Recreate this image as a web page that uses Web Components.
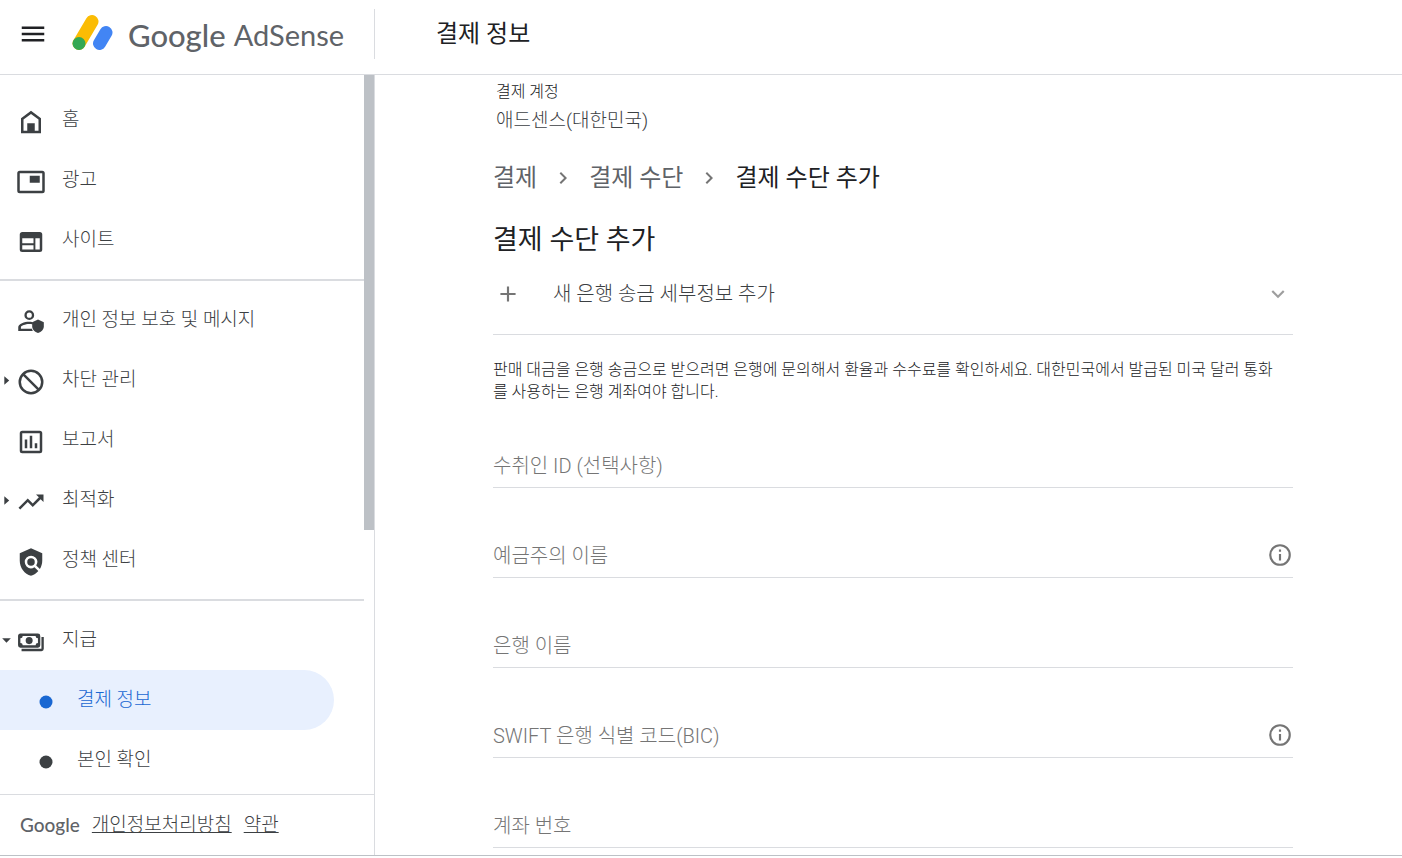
<!DOCTYPE html>
<html lang="ko">
<head>
<meta charset="utf-8">
<meta name="viewport" content="width=device-width, initial-scale=1">
<title>결제 정보 - Google AdSense</title>
<style>
  body {
    margin: 0;
    background: #fff;
    color: #3c4043;
    font-family: Roboto, "Noto Sans CJK KR", sans-serif;
    font-weight: 300;
    font-size: 19px;
  }
</style>
</head>
<body>
<adsense-app></adsense-app>

<script>
const ICONS = {
  home: '<path d="M12 3 4 9v12h16V9zm6 16H6v-9l6-4.5 6 4.5z"/><path d="M9 13h6v7H9z"/>',
  ads: '<path d="M19 7h-8v5.500h8zM21 3H3a2 2 0 0 0-2 2v14a2 2 0 0 0 2 2h18a2 2 0 0 0 2-2V5a2 2 0 0 0-2-2zm0 16H3V5h18z"/>',
  sites: '<path fill-rule="evenodd" d="M5 4h14a2 2 0 0 1 2 2v12a2 2 0 0 1-2 2H5a2 2 0 0 1-2-2V6c0-1.100.9-2 2-2zm0 5v4h9V9zm0 5.500V18h9v-3.500zM15.500 9v9H19V9z"/>',
  privacy: '<g transform="translate(.4 .3) scale(.93)"><path fill-rule="evenodd" d="M11 2.500a4.200 4.200 0 1 1 0 8.400 4.200 4.200 0 0 1 0-8.400zm0 2a2.200 2.200 0 1 0 0 4.400 2.200 2.200 0 0 0 0-4.400z"/><path d="M14 12.700v2c-1-.3-2-.4-3.200-.4-3 0-7 1.500-7 2.700V18.300h9.500c.1.700.4 1.400.8 2H1.500v-3.300c0-3 5.500-4.700 9.300-4.700 1.100 0 2.200.1 3.200.4z"/><path d="M18.500 10.500l5 2.200v3.500c0 2.700-2.100 5.100-5 5.800-2.900-.7-5-3.100-5-5.800v-3.500z"/></g>',
  block: '<path fill-rule="evenodd" d="M12 2a10 10 0 1 1 0 20 10 10 0 0 1 0-20zm0 2a8 8 0 1 0 0 16 8 8 0 0 0 0-16z"/><path d="M5 6.400 6.400 5 19 17.600 17.600 19z"/>',
  report: '<path d="M19 3H5a2 2 0 0 0-2 2v14a2 2 0 0 0 2 2h14a2 2 0 0 0 2-2V5a2 2 0 0 0-2-2zm0 16H5V5h14zM7 10h2v7H7zm4-3h2v10h-2zm4 6h2v4h-2z"/>',
  trend: '<path d="m16 6 2.290 2.290-4.880 4.880-4-4L2 16.590 3.410 18l6-6 4 4 6.300-6.290L22 12V6z"/>',
  policy: '<path d="m21 5-9-4-9 4v6c0 5.550 3.840 10.740 9 12 2.300-.56 4.330-1.900 5.880-3.710l-3.120-3.120a5 5 0 0 1-6.290-.64 5 5 0 0 1 0-7.070 5 5 0 0 1 7.070 0 5 5 0 0 1 .64 6.290l2.900 2.900C20.290 15.690 21 13.380 21 11z"/><circle cx="12" cy="12" r="3"/>',
  pay: '<g transform="translate(.7 .6) scale(.936)"><path fill-rule="evenodd" d="M3 5h15a2 2 0 0 1 2 2v8a2 2 0 0 1-2 2H3a2 2 0 0 1-2-2V7c0-1.100.9-2 2-2zm2 2a2 2 0 0 1-2 2v4a2 2 0 0 1 2 2h11a2 2 0 0 1 2-2V9a2 2 0 0 1-2-2zm5.500 1a3 3 0 1 1 0 6 3 3 0 0 1 0-6z"/><path d="M23 8v10a2 2 0 0 1-2 2H4v-2h17V8z"/></g>',
  dot: '<circle cx="12" cy="12" r="5.200"/>',
  menu: '<path d="M3 6h18v2H3zm0 5h18v2H3zm0 5h18v2H3z"/>',
  next: '<path d="M8.590 16.590 13.170 12 8.590 7.410 10 6l6 6-6 6z"/>',
  down: '<path d="M7.410 8.590 12 13.170l4.590-4.580L18 10l-6 6-6-6z"/>',
  plus: '<path d="M19 13h-6v6h-2v-6H5v-2h6V5h2v6h6z"/>',
  info: '<path d="M11 7h2v2h-2zm0 4h2v6h-2zm1-9a10 10 0 1 0 0 20 10 10 0 0 0 0-20zm0 18a8 8 0 1 1 0-16 8 8 0 0 1 0 16z"/>',
  caret: '<path d="M8 4v16l9-8z"/>',
  caretOpen: '<path d="M4 8h16l-8 8z"/>'
};

class Base extends HTMLElement {
  connectedCallback() {
    if (this.shadowRoot) return;
    const root = this.attachShadow({ mode: 'open' });
    const t = document.createElement('template');
    t.innerHTML = '<style>*{box-sizing:border-box}:host([hidden]){display:none}</style>' + this.markup();
    root.append(t.content.cloneNode(true));
  }
  attr(name) { return this.getAttribute(name) || ''; }
}

customElements.define('ui-icon', class extends Base {
  markup() {
    return `<style>
      :host { display: inline-flex; flex: none; width: 24px; height: 24px; }
      svg { width: 100%; height: 100%; fill: currentColor; }
    </style><svg viewBox="0 0 24 24" aria-hidden="true">${ICONS[this.attr('name')]}</svg>`;
  }
});

customElements.define('adsense-logo', class extends Base {
  markup() {
    return `<style>
      :host { display: flex; align-items: center; color: #5f6368; font-family: Lato, sans-serif; font-weight: 400; line-height: 40px; }
      svg { width: 42px; height: 38px; margin: 0 15px 2px 0; }
      span { padding-top: 1px; }
      .google { font-size: 31px; font-weight: 500; }
      .product { font-size: 29px; margin-left: 8px; }
    </style>
    <svg viewBox="0 0 42 38" aria-hidden="true" stroke-linecap="round" stroke-width="13">
      <path d="M21 7.500 8 29.500" stroke="#fbbc04"/>
      <path d="M35 18.500 28.500 29.500" stroke="#4285f4"/>
      <circle cx="8" cy="29.500" r="6.500" fill="#34a853"/>
    </svg>
    <span class="google">Google</span><span class="product">AdSense</span>`;
  }
});

customElements.define('app-header', class extends Base {
  markup() {
    return `<style>
      :host { display: flex; height: 75px; border-bottom: 1px solid #dadce0; }
      .brand { display: flex; align-items: center; flex: none; width: 375px; height: 50px; margin-top: 9px; padding-left: 18px; border-right: 1px solid #dadce0; }
      button { display: flex; padding: 0; border: 0; background: none; color: #202124; margin-right: 23px; }
      button ui-icon { width: 30px; height: 30px; }
      h1 { margin: 16px 0 0 61px; font-size: 24px; line-height: 36px; font-weight: 400; color: #202124; }
    </style>
    <div class="brand">
      <button type="button" aria-label="메뉴"><ui-icon name="menu"></ui-icon></button>
      <adsense-logo></adsense-logo>
    </div>
    <h1><slot></slot></h1>`;
  }
});

customElements.define('nav-item', class extends Base {
  markup() {
    const caret = this.attr('caret');
    return `<style>
      :host { display: block; }
      a { display: flex; align-items: center; height: 60px; margin-right: 30px; color: inherit; text-decoration: none; border-radius: 0 30px 30px 0; }
      .caret { display: flex; width: 13px; flex: none; }
      .caret ui-icon { width: 13px; height: 13px; }
      .icon { width: 30px; height: 30px; margin: 4px 16px 0 3px; }
      .text { line-height: 28px; }
      :host([sub]) .icon { margin-left: 18px; }
      :host([selected]) a { background: #e8f0fe; color: #1967d2; }
    </style>
    <a href="#" ${this.hasAttribute('selected') ? 'aria-current="page"' : ''}>
      <span class="caret">${caret ? `<ui-icon name="${caret}"></ui-icon>` : ''}</span>
      <ui-icon class="icon" name="${this.attr('icon') || 'dot'}"></ui-icon>
      <span class="text"><slot></slot></span>
    </a>`;
  }
});

customElements.define('side-nav', class extends Base {
  markup() {
    return `<style>
      :host { display: flex; flex-direction: column; min-height: 0; border-right: 1px solid #dadce0; }
      .scroll { display: flex; flex: 1; min-height: 0; overflow: hidden; }
      nav { flex: 1; padding-top: 15px; }
      hr { height: 2px; margin: 9px 0; border: 0; background: #dadce0; }
      .thumb { width: 10px; height: calc(64% - 5px); background: #bdc1c6; }
      footer { display: flex; align-items: center; gap: 12px; height: 61px; flex: none; padding-left: 20px; border-top: 1px solid #dadce0; }
      footer .logo { font-family: Lato, sans-serif; font-weight: 500; color: #5f6368; line-height: 28px; }
      footer a { color: inherit; line-height: 28px; }
    </style>
    <div class="scroll">
      <nav aria-label="기본 메뉴">
        <nav-item icon="home">홈</nav-item>
        <nav-item icon="ads">광고</nav-item>
        <nav-item icon="sites">사이트</nav-item>
        <hr>
        <nav-item icon="privacy">개인 정보 보호 및 메시지</nav-item>
        <nav-item icon="block" caret="caret">차단 관리</nav-item>
        <nav-item icon="report">보고서</nav-item>
        <nav-item icon="trend" caret="caret">최적화</nav-item>
        <nav-item icon="policy">정책 센터</nav-item>
        <hr>
        <nav-item icon="pay" caret="caretOpen">지급</nav-item>
        <nav-item sub selected>결제 정보</nav-item>
        <nav-item sub>본인 확인</nav-item>
      </nav>
      <div class="thumb"></div>
    </div>
    <footer><span class="logo">Google</span><a href="#">개인정보처리방침</a><a href="#">약관</a></footer>`;
  }
});

customElements.define('text-field', class extends Base {
  markup() {
    return `<style>
      :host { display: grid; grid-template-columns: 1fr auto; align-items: center; height: 45px; border-bottom: 1px solid #dadce0; color: #757575; font-size: 20px; }
      label, input { grid-row: 1; grid-column: 1; min-width: 0; }
      label { line-height: 28px; padding-top: 2px; pointer-events: none; }
      input { width: 100%; height: 44px; padding: 0; border: 0; outline: 0; background: none; font: inherit; color: #202124; }
      button { display: flex; padding: 0; border: 0; background: none; color: #757575; }
      button ui-icon { width: 26px; height: 26px; }
    </style>
    <input id="field" type="text"><label for="field"><slot></slot></label>
    ${this.hasAttribute('info') ? '<button type="button" aria-label="도움말"><ui-icon name="info"></ui-icon></button>' : ''}`;
  }
});

customElements.define('bread-crumbs', class extends Base {
  markup() {
    return `<style>
      :host { display: flex; align-items: center; gap: 14px; font-size: 24px; line-height: 32px; font-weight: 400; color: #5f6368; }
      a { color: inherit; text-decoration: none; }
      [aria-current] { color: #202124; }
      ui-icon { color: #757575; }
    </style>
    <a href="#">결제</a><ui-icon name="next"></ui-icon>
    <a href="#">결제 수단</a><ui-icon name="next"></ui-icon>
    <span aria-current="page">결제 수단 추가</span>`;
  }
});

customElements.define('payment-form', class extends Base {
  markup() {
    return `<style>
      :host { display: block; max-width: 800px; margin: 0 auto; padding-top: 5px; color: #202124; }
      .label { padding-left: 3px; font-size: 16px; line-height: 24px; }
      .account { padding-left: 3px; line-height: 34px; color: #3c4043; }
      bread-crumbs { margin-top: 24px; }
      h2 { margin: 28px 0 0; font-size: 27px; line-height: 36px; font-weight: 400; }
      .method { display: flex; align-items: center; width: 100%; height: 77px; padding: 0 2px 4px; border: 0; border-bottom: 1px solid #dadce0; background: none; font: inherit; font-size: 20px; color: #3c4043; text-align: left; }
      .method span { flex: 1; padding: 0 0 3px 32px; }
      .method ui-icon { width: 26px; height: 26px; color: #757575; }
      .method ui-icon:last-child { color: #9e9e9e; }
      p { margin: 24px 0 40px; padding-right: 8px; font-size: 16px; line-height: 22px; }
      form { display: grid; gap: 45px; }
    </style>
    <div class="label">결제 계정</div>
    <div class="account">애드센스(대한민국)</div>
    <bread-crumbs></bread-crumbs>
    <h2>결제 수단 추가</h2>
    <button class="method" type="button" aria-expanded="true">
      <ui-icon name="plus"></ui-icon><span>새 은행 송금 세부정보 추가</span><ui-icon name="down"></ui-icon>
    </button>
    <p>판매 대금을 은행 송금으로 받으려면 은행에 문의해서 환율과 수수료를 확인하세요. 대한민국에서 발급된 미국 달러 통화를 사용하는 은행 계좌여야 합니다.</p>
    <form>
      <text-field>수취인 ID (선택사항)</text-field>
      <text-field info>예금주의 이름</text-field>
      <text-field>은행 이름</text-field>
      <text-field info>SWIFT 은행 식별 코드(BIC)</text-field>
      <text-field>계좌 번호</text-field>
    </form>`;
  }
});

customElements.define('adsense-app', class extends Base {
  markup() {
    return `<style>
      :host { display: grid; grid-template: auto minmax(0, 1fr) / 375px minmax(0, 1fr); height: calc(100vh - 2px); border-bottom: 1px solid #bdc1c6; box-sizing: border-box; }
      app-header { grid-column: 1 / -1; }
      main { overflow: hidden; padding-left: 9px; }
    </style>
    <app-header>결제 정보</app-header>
    <side-nav></side-nav>
    <main><payment-form></payment-form></main>`;
  }
});
</script>
</body>
</html>
